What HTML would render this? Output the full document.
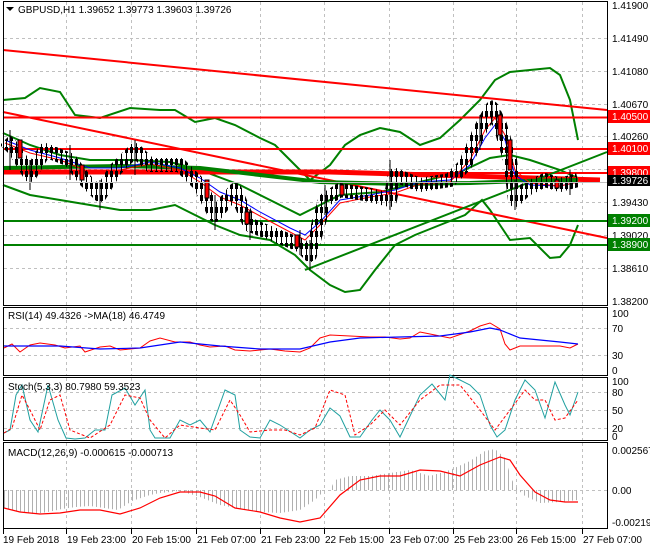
<!DOCTYPE html>
<html><head><meta charset="utf-8"><style>
html,body{margin:0;padding:0;background:#fff;}
svg{display:block;font-family:"Liberation Sans",sans-serif;}
text{font-size:10px;fill:#000;}
</style></head><body>
<svg width="650" height="550" viewBox="0 0 650 550" xmlns="http://www.w3.org/2000/svg">
<defs>
<pattern id="hist" patternUnits="userSpaceOnUse" width="4" height="10"><rect x="0" y="0" width="1" height="10" fill="#b0b0b0"/></pattern>
<pattern id="cand" patternUnits="userSpaceOnUse" width="5" height="12"><rect x="1" y="0" width="1" height="12" fill="#000"/><rect x="0" y="3" width="3" height="6" fill="#000"/></pattern>
</defs>
<rect width="650" height="550" fill="#fff"/>
<!-- grid -->
<g stroke="#c0c0c0" stroke-dasharray="3,3" stroke-width="1">
<path d="M66.5 2V305M131.5 2V305M196.5 2V305M260.5 2V305M324.5 2V305M389.5 2V305M453.5 2V305M516.5 2V305M582.5 2V305"/>
<path d="M66.5 308V375M131.5 308V375M196.5 308V375M260.5 308V375M324.5 308V375M389.5 308V375M453.5 308V375M516.5 308V375M582.5 308V375"/>
<path d="M66.5 378V440M131.5 378V440M196.5 378V440M260.5 378V440M324.5 378V440M389.5 378V440M453.5 378V440M516.5 378V440M582.5 378V440"/>
<path d="M66.5 443V528M131.5 443V528M196.5 443V528M260.5 443V528M324.5 443V528M389.5 443V528M453.5 443V528M516.5 443V528M582.5 443V528"/>
<path d="M4 38.5H607M4 71.5H607M4 104.5H607M4 136.5H607M4 169.5H607M4 202.5H607M4 235.5H607M4 268.5H607"/>
<path d="M4 328.5H607M4 355.5H607M4 392.5H607M4 410.5H607M4 428.5H607M4 490.5H607"/>
</g>
<!-- main panel -->
<g fill="none">
<polyline stroke="#008000" stroke-width="2" points="3,100 25,98 40,88 60,92 75,115 100,118 130,108 160,110 175,110 195,122 215,118 235,125 260,138 275,145 300,170 310,180 330,165 345,145 360,135 380,128 400,132 420,145 440,138 460,120 480,100 495,80 510,72 530,70 550,68 560,75 570,100 578,140"/>
<polyline stroke="#008000" stroke-width="2" points="3,185 30,195 60,200 90,205 120,210 150,210 175,205 195,215 215,225 240,235 270,240 295,255 310,270 330,285 345,292 360,290 375,270 395,245 415,235 440,225 465,215 482,200 490,210 500,225 510,240 530,238 550,258 560,257 570,245 578,225"/>
<polyline stroke="#008000" stroke-width="2" points="3,133 30,145 60,155 90,160 130,160 170,162 200,170 240,185 270,200 300,215 320,205 340,195 380,192 420,182 460,172 490,158 510,155 530,160 560,170 578,178"/>
<path stroke="#ff0000" stroke-width="2" d="M3 50L607 110M3 112L607 238M3 117.5H607M3 149H607"/>
<path stroke="#ff0000" stroke-width="5" d="M3 172H330L600 180"/>
<path stroke="#ff0000" stroke-width="2" d="M3 173H607"/>
<polyline stroke="#008000" stroke-width="4" points="3,168 120,166 200,168 260,175 320,182 400,184 470,183 520,181 578,180"/>
<path stroke="#008000" stroke-width="2" d="M3 221H607M3 245H607M305 270L607 152"/>
<polyline stroke="#0000ff" stroke-width="1" points="5,140 30,150 60,158 90,168 120,168 150,162 180,168 200,178 220,192 240,200 260,212 290,228 305,235 320,222 340,200 370,195 395,190 420,182 450,180 470,165 485,138 495,125 505,140 515,175 530,185 560,186 578,182"/>
<polyline stroke="#ff0000" stroke-width="1" points="5,143 30,153 60,160 90,172 120,170 150,164 180,170 200,182 220,197 240,205 260,216 290,232 305,240 320,225 340,203 370,197 395,193 420,184 450,182 470,160 485,130 495,118 505,135 515,170 530,183 560,186 578,182"/>
<polyline stroke="url(#cand)" stroke-width="14" stroke-linejoin="round" points="5,140 15,150 30,175 45,150 70,160 85,180 100,195 115,170 135,150 150,165 180,165 200,185 215,215 235,190 250,225 275,235 300,245 310,255 325,200 340,190 370,195 390,200 395,175 420,185 450,180 465,165 480,130 492,108 500,125 510,160 515,200 525,190 545,180 560,185 578,180"/>
</g>
<g fill="#000" stroke="#000" stroke-width="1">
<path d="M10 130V170M30 160V190M70 145V180M100 180V210M135 140V175M215 195V230M250 210V240M300 230V255M310 240V270M325 185V215M390 160V210M480 115V150M492 100V125M500 110V140M515 180V210M570 170V195"/>
</g>
<g fill="#ff0000" stroke="#000" stroke-width="1">
<rect x="18" y="140" width="4" height="18"/><rect x="80" y="165" width="4" height="15"/><rect x="205" y="180" width="4" height="18"/><rect x="245" y="212" width="4" height="12"/><rect x="295" y="235" width="4" height="12"/><rect x="498" y="115" width="4" height="20"/><rect x="508" y="140" width="4" height="30"/><rect x="340" y="185" width="4" height="10"/><rect x="555" y="180" width="4" height="8"/>
</g>
<line x1="3" y1="182.5" x2="607" y2="182.5" stroke="#c0c0c0"/>
<g fill="none" stroke="#000" stroke-width="1">
<rect x="3.5" y="1.5" width="604" height="304"/>
<rect x="3.5" y="307.5" width="604" height="68"/>
<rect x="3.5" y="377.5" width="604" height="63"/>
<rect x="3.5" y="442.5" width="604" height="86"/>
</g>
<path d="M6 7L14 7L10 11Z" fill="#000"/>
<text x="18" y="13">GBPUSD,H1  1.39652 1.39773 1.39603 1.39726</text>
<g>
<text x="612" y="9">1.41900</text><text x="612" y="42">1.41490</text><text x="612" y="75">1.41080</text><text x="612" y="108">1.40670</text><text x="612" y="140">1.40260</text><text x="612" y="206">1.39430</text><text x="612" y="239">1.39020</text><text x="612" y="272">1.38610</text><text x="612" y="305">1.38200</text>
</g>
<rect x="608" y="110" width="42" height="13" fill="#ff0000"/><text x="612" y="120" style="fill:#fff">1.40500</text>
<rect x="608" y="142" width="42" height="13" fill="#ff0000"/><text x="612" y="152" style="fill:#fff">1.40100</text>
<rect x="608" y="166" width="42" height="13" fill="#ff0000"/><text x="612" y="176" style="fill:#fff">1.39800</text>
<rect x="608" y="175" width="42" height="11" fill="#000"/><text x="612" y="184" style="fill:#fff">1.39726</text>
<rect x="608" y="214" width="42" height="13" fill="#008000"/><text x="612" y="224" style="fill:#fff">1.39200</text>
<rect x="608" y="238" width="42" height="13" fill="#008000"/><text x="612" y="248" style="fill:#fff">1.38900</text>
<!-- RSI -->
<polyline fill="none" stroke="#ff0000" points="4,348 12,344 20,352 30,345 40,343 55,345 65,348 80,346 85,352 100,347 110,346 120,350 130,349 140,348 150,341 160,338 175,342 190,342 200,345 210,347 225,346 235,350 250,351 270,349 285,351 300,352 310,348 320,338 330,335 350,336 370,337 385,337 400,339 410,338 420,332 425,333 440,336 450,338 470,331 480,326 490,323 500,329 505,344 510,350 520,346 540,346 560,346 570,348 578,344"/>
<polyline fill="none" stroke="#0000ff" stroke-width="1.2" points="4,346 60,346 100,349 140,348 180,342 220,346 260,349 300,349 330,342 360,338 400,337 440,336 470,332 490,328 500,330 520,338 560,342 578,344"/>
<text x="8" y="319">RSI(14) 49.4326  -&gt;MA(18) 46.4749</text>
<text x="612" y="317">100</text><text x="612" y="332">70</text><text x="612" y="359">30</text><text x="612" y="374">0</text>
<!-- Stoch -->
<polyline fill="none" stroke="#20a0a0" points="4,433 10,430 16,395 22,385 30,420 38,432 48,385 58,420 66,438 75,439 85,438 95,430 105,430 112,395 125,388 135,405 145,390 150,430 155,438 170,438 180,420 190,425 200,420 210,432 225,390 235,395 240,430 250,437 260,438 270,420 280,425 300,438 310,430 320,425 330,408 340,416 350,437 360,437 372,420 380,410 390,420 400,437 420,395 432,384 445,400 450,375 460,380 470,385 480,395 490,425 497,437 505,430 515,400 525,380 535,390 545,418 555,382 565,405 570,415 578,392"/>
<polyline fill="none" stroke="#ff0000" stroke-dasharray="3,2" points="4,433 12,428 22,395 30,410 40,430 50,400 60,395 70,430 90,438 110,425 125,395 140,398 150,420 165,438 180,425 200,428 215,430 230,400 240,415 250,432 270,430 285,430 300,435 315,428 330,390 345,395 355,435 370,425 385,410 400,425 420,400 440,385 460,385 480,410 495,430 510,410 525,390 535,400 545,400 555,420 565,418 578,400"/>
<text x="8" y="390">Stoch(5,3,3) 80.7980 59.3523</text>
<text x="612" y="385">100</text><text x="612" y="396">80</text><text x="612" y="414">50</text><text x="612" y="432">20</text><text x="612" y="440">0</text>
<!-- MACD histogram -->
<polygon fill="url(#hist)" points="4,490 4,508 20,512 34,514 48,512 62,509 76,507 90,506 104,508 118,510 132,501 150,495 160,493 180,491 200,497 220,505 240,509 260,512 280,513 300,510 315,500 325,490"/>
<polygon fill="url(#hist)" points="330,490 335,480 350,476 370,476 390,473 410,470 430,476 450,470 470,461 485,451 495,449 505,458 512,480 518,490"/>
<polygon fill="url(#hist)" points="518,490 525,496 540,503 560,502 578,500 578,490"/>
<polyline fill="none" stroke="#ff0000" stroke-width="1.2" points="4,508 20,512 40,514 60,513 80,510 100,510 120,514 140,508 160,498 180,492 200,492 215,496 235,508 260,512 280,518 300,522 320,518 340,495 360,480 380,476 400,476 420,470 440,471 460,476 480,465 500,457 510,460 520,475 535,492 550,500 565,502 578,502"/>
<text x="8" y="456">MACD(12,26,9) -0.000615 -0.000713</text>
<text x="612" y="454">0.002567</text><text x="612" y="494">0.00</text><text x="612" y="526">-0.002197</text>
<path stroke="#000" d="M3.5 529V534M66.5 529V534M131.5 529V534M196.5 529V534M260.5 529V534M324.5 529V534M389.5 529V534M453.5 529V534M516.5 529V534M582.5 529V534"/>
<g><text x="3" y="543">19 Feb 2018</text><text x="67" y="543">19 Feb 23:00</text><text x="132" y="543">20 Feb 15:00</text><text x="197" y="543">21 Feb 07:00</text><text x="261" y="543">21 Feb 23:00</text><text x="325" y="543">22 Feb 15:00</text><text x="390" y="543">23 Feb 07:00</text><text x="454" y="543">25 Feb 23:00</text><text x="517" y="543">26 Feb 15:00</text><text x="583" y="543">27 Feb 07:00</text></g>
</svg>
</body></html>
